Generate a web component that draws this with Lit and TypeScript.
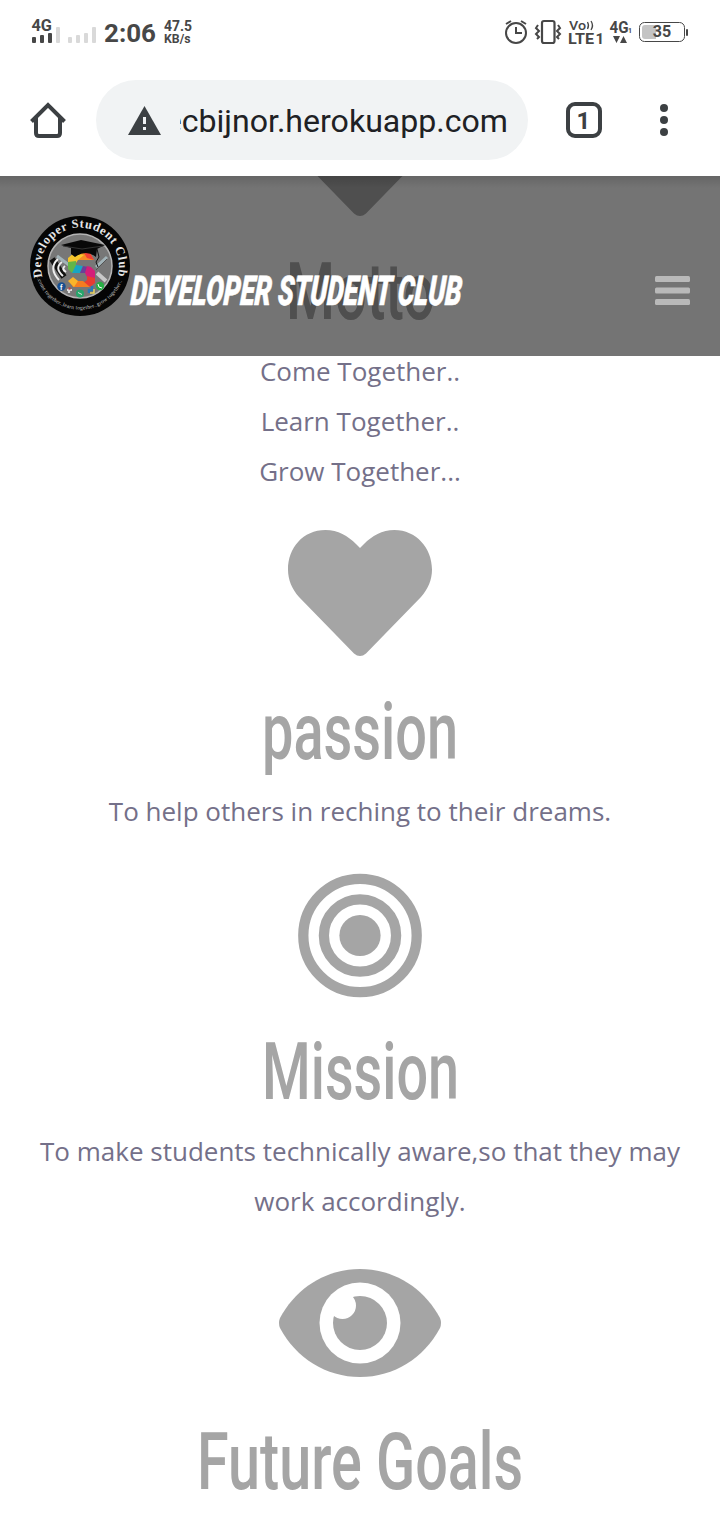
import { LitElement, html, css, svg } from "lit";
import { customElement } from "lit/decorators.js";

const heart = svg`<path transform="translate(0 9)" d="M72 18 68 14C60 6 50 0 37.500 0C15 0 0 18 0 39.500C0 50 4 59 11 67L66 123.500Q69 126 72 126Q75 126 78 123.500L133 67C140 59 144 50 144 39.500C144 18 128 0 106.500 0C94 0 84 6 76 14Z"/>`;
const target = svg`<circle cx="72" cy="74.500" r="20.600"/><circle cx="72" cy="74.500" r="36.100" fill="none" stroke="#a5a5a5" stroke-width="10.300"/><circle cx="72" cy="74.500" r="56.700" fill="none" stroke="#a5a5a5" stroke-width="10.300"/>`;
const eye = svg`<g transform="translate(-9 18)"><path d="M1 49C17 19 47 0 81 0S145 19 161 49Q163 54 161 59C145 89 115 108 81 108S17 89 1 59Q-1 54 1 49Z"/><circle cx="81" cy="54" r="40.500" fill="#fff"/><circle cx="81" cy="54" r="27"/><circle cx="63.500" cy="36.500" r="13.500" fill="#fff"/></g>`;

const sections = [
  { icon: heart, title: "Motto", width: 149, lines: ["Come Together..", "Learn Together..", "Grow Together..."] },
  { icon: heart, title: "passion", width: 196, lines: ["To help others in reching to their dreams."] },
  { icon: target, title: "Mission", width: 197, lines: ["To make students technically aware,so that they may", "work accordingly."] },
  { icon: eye, title: "Future Goals", width: 326, lines: [] as string[] },
];

@customElement("status-bar")
class StatusBar extends LitElement {
  static styles = css`
    :host { display: block; height: 64px; }
    svg { display: block; font-family: Roboto, sans-serif; font-weight: 700; }
  `;
  render() {
    return html`<svg width="720" height="64" fill="#474747">
      <text x="31.500" y="31" font-size="16.500" textLength="20.500" lengthAdjust="spacingAndGlyphs">4G</text>
      <rect x="32" y="37" width="4" height="6" rx="1"/><rect x="40" y="35" width="4" height="8" rx="1"/><rect x="48" y="33" width="4" height="10" rx="1"/>
      <g fill="#d9d9d9"><rect x="56" y="27" width="4" height="16" rx="1"/><rect x="68" y="37" width="4" height="6" rx="1"/><rect x="76" y="35" width="4" height="8" rx="1"/><rect x="84" y="33" width="4" height="10" rx="1"/><rect x="92" y="27" width="4" height="16" rx="1"/></g>
      <text x="104" y="42" font-size="26.500" textLength="52" lengthAdjust="spacingAndGlyphs">2:06</text>
      <text x="164" y="31" font-size="14" textLength="28" lengthAdjust="spacingAndGlyphs">47.5</text>
      <text x="164" y="43" font-size="12" textLength="26.500" lengthAdjust="spacingAndGlyphs">KB/s</text>
      <g fill="none" stroke="#474747" stroke-width="2"><circle cx="516" cy="33" r="10"/><path d="M516 27v6h6M506 24l5-3M526 24l-5-3"/>
        <rect x="542" y="21" width="12.500" height="22" rx="2" stroke-width="2.200"/>
        <path d="M538 25l-2 3 3 3-3 3 3 3-2 2M558 25l2 3-3 3 3 3-3 3 2 2"/></g>
      <text x="569" y="30" font-size="13.500" font-weight="500" textLength="17" lengthAdjust="spacingAndGlyphs">Vo</text>
      <path d="M587.500 22q2 3.500 0 7M591 21q3 4.500 0 9" fill="none" stroke="#474747" stroke-width="1.300"/>
      <text x="568" y="44" font-size="15" textLength="26" lengthAdjust="spacingAndGlyphs">LTE</text><text x="595.500" y="44" font-size="15">1</text>
      <text x="609.500" y="32.500" font-size="16" textLength="19" lengthAdjust="spacingAndGlyphs">4G</text><text x="628" y="32.500" font-size="7">1</text>
      <path d="M613 36h7l-3.500 7zM620 43h7l-3.500-7z"/>
      <rect x="639.500" y="22.500" width="45" height="19" rx="5" fill="none" stroke="#474747"/>
      <path d="M645 25h11v14h-11q-3 0-3-3v-8q0-3 3-3" fill="#c4c4c4"/><rect x="686" y="29" width="2" height="7" rx="1"/>
      <text x="662" y="37" text-anchor="middle" font-size="16">35</text>
    </svg>`;
  }
}

@customElement("browser-bar")
class BrowserBar extends LitElement {
  static styles = css`
    :host { display: flex; align-items: center; box-sizing: border-box; height: 112px; padding: 0 30px; color: #3c4043; }
    svg { display: block; flex: none; }
    .address { display: flex; align-items: center; box-sizing: border-box; width: 432px; height: 80px; margin-left: 30px; padding: 0 20px 0 32px; border-radius: 40px; background: #f1f3f4; }
    .url { display: flex; justify-content: flex-end; width: 328px; margin-left: 19px; padding-top: 2px; overflow: hidden; white-space: nowrap; font: 400 32.100px/44px Roboto, sans-serif; color: #202124; }
    .tabs { margin-left: 38px; }
    .more { margin-left: 57px; }
  `;
  render() {
    return html`
      <svg width="36" height="36" fill="none" stroke="#3c4043" stroke-width="4"><path d="M1.500 19.500 18 3l16.500 16.500M6 16v15q0 3 3 3h18q3 0 3-3V16"/></svg>
      <div class="address">
        <svg width="33" height="29" fill="#3c4043"><path d="M16.500 0 33 29H0z"/><path d="M15 11h3v7h-3zm0 10h3v3h-3z" fill="#f1f3f4"/></svg>
        <div class="url"><span>ecbijnor.herokuapp.com</span></div>
      </div>
      <svg class="tabs" width="36" height="36"><rect x="2" y="2" width="32" height="32" rx="7" fill="none" stroke="#3c4043" stroke-width="4"/><text x="17.500" y="26.500" text-anchor="middle" font-family="Roboto, sans-serif" font-weight="700" font-size="24" fill="#3c4043">1</text></svg>
      <svg class="more" width="10" height="36" overflow="visible" fill="#3c4043"><circle cx="5" cy="6" r="4"/><circle cx="5" cy="18" r="4"/><circle cx="5" cy="30" r="4"/></svg>
    `;
  }
}

@customElement("club-header")
class ClubHeader extends LitElement {
  static styles = css`
    :host { display: flex; box-sizing: border-box; height: 180px; padding: 40px 30px 0; background: linear-gradient(rgba(0,0,0,.13), rgba(0,0,0,0) 12px), rgba(18,18,18,.587); }
    svg { display: block; flex: none; }
    .name { margin-top: 50px; overflow: visible; }
    .menu { margin: 59px 0 0 auto; }
  `;
  render() {
    return html`
      <svg width="100" height="100">
        <defs><path id="top" d="M12.400 61A39 39 0 1 1 87.600 61"/><path id="bottom" d="M6 58A45 45 0 0 0 94 58"/></defs>
        <circle cx="50" cy="50" r="50" fill="#050505"/>
        <circle cx="50" cy="50" r="32" fill="#777" stroke="#b5b5b5" stroke-width="1.500"/>
        <text font-family="Liberation Serif, serif" font-weight="700" font-size="12.500" fill="#e6e6e6"><textPath href="#top" textLength="142" startOffset="0">Developer Student Club</textPath></text>
        <text font-family="Liberation Serif, serif" font-size="5.500" fill="#ccc"><textPath href="#bottom" textLength="112" startOffset="3">..come together..learn together..grow together..</textPath></text>
        <path d="m27 40 12 9M77 41 66 51" stroke="#a2b3b8" stroke-width="3"/><path d="m77 43-11 11" stroke="#555"/><path d="m67 57 9 8" stroke="#c9c9c9" stroke-width="4"/>
        <path d="M22 43 34 61" stroke="#111" stroke-width="6"/>
        <path d="M35 50q-4 3 1 6M32 46q-8 6 1 14M28 43q-10 9 1 21" fill="none" stroke="#eee" stroke-width="2"/>
        <path d="M44 37H60L64 44H48z" fill="#f58a25"/><path d="M54 37h6l4 7-7-2z" fill="#ef3e36"/>
        <path d="M44 37 38 42V48L46 47 48 44 54 39z" fill="#f5c52c"/><path d="M38 46 46 45V49L51 51 42 57 38 53z" fill="#63b548"/>
        <path d="M46 49 53 50 50 57H42z" fill="#18a5c4"/><path d="M53 50 58 51 56 57H50z" fill="#6c3f98"/>
        <path d="M57 50 61 51 65 55V63L57 61 55 57z" fill="#d41e79"/><path d="M57 60 65 62V67L60 71 53 67 57 64z" fill="#e83b32"/>
        <path d="M53 65 60 71H43L39 65 43 62 47 65z" fill="#f47c20"/><path d="m43 61 5 4-4 6-6-6z" fill="#f9b52b"/>
        <path d="M31 29 51 24 75 29 67 33 66 41Q56 33 45 41L41 38V32z" fill="#080808"/><path d="M33 30 52 33 73 30" fill="none" stroke="#333"/><path d="m67 33 2 8-3 5 2 5" fill="none" stroke="#111"/>
        <circle cx="31.500" cy="70.500" r="4.200" fill="#174f91"/><text x="30" y="73.500" font-family="Roboto, sans-serif" font-size="7" font-weight="700" fill="white">f</text>
        <path d="M39 72v5m-2-3h5" stroke="#ddd" stroke-width="2.200"/><circle cx="39.500" cy="72.500" r="1.300" fill="#b84646"/>
        <circle cx="50" cy="77.500" r="4" fill="#25a66b"/><path d="m48 76.500 4 2" stroke="#ddd"/>
        <path d="M59 77v-3h3v-4" stroke="#287ab5" stroke-width="2.500" fill="none"/><path d="M60 77h4v-4" stroke="#ead45f" stroke-width="1.500" fill="none"/>
        <circle cx="70" cy="70" r="4.200" fill="#28ae45"/><path d="m68 68q0 4 4 4" fill="none" stroke="white"/>
      </svg>
      <svg class="name" width="340" height="50"><text transform="translate(0 38.500) skewX(-4)" x="0" y="0" font-family="Roboto, sans-serif" font-style="italic" font-weight="900" font-size="41" textLength="331" lengthAdjust="spacingAndGlyphs" fill="#fff" stroke="#fff" stroke-width=".6">DEVELOPER STUDENT CLUB</text></svg>
      <svg class="menu" width="35" height="32" fill="#b9b9b9"><rect y="1" width="35" height="6" rx="1.500"/><rect y="12.500" width="35" height="6" rx="1.500"/><rect y="24" width="35" height="6" rx="1.500"/></svg>
    `;
  }
}

@customElement("app-root")
class AppRoot extends LitElement {
  static styles = css`
    :host { display: flex; flex-direction: column; height: 1520px; overflow: hidden; background: #fff; }
    .page { position: relative; flex: 1; min-height: 0; overflow: hidden; }
    .overlay { position: absolute; top: 0; left: 0; right: 0; }
    .content { display: flex; flex-direction: column; gap: 24px; margin-top: -95px; text-align: center; font: 400 26px/50px "Open Sans", "Noto Sans", sans-serif; color: #747089; }
    .section { display: flex; flex-direction: column; align-items: center; }
    .icon, .title { display: block; fill: #a5a5a5; overflow: visible; }
    .title { font-family: Roboto, sans-serif; font-weight: 500; }
    .lines { margin: -1px 0 1px; }
    .line { margin: 0; white-space: nowrap; }
  `;
  render() {
    return html`
      <status-bar></status-bar>
      <browser-bar></browser-bar>
      <main class="page">
        <div class="content">
          ${sections.map(s => html`<section class="section">
            <svg class="icon" width="144" height="144">${s.icon}</svg>
            <svg class="title" width=${s.width} height="122"><text x="0" y="93.500" font-size="80" textLength=${s.width} lengthAdjust="spacingAndGlyphs">${s.title}</text></svg>
            <div class="lines">${s.lines.map(l => html`<p class="line">${l}</p>`)}</div>
          </section>`)}
        </div>
        <club-header class="overlay"></club-header>
      </main>`;
  }
}
